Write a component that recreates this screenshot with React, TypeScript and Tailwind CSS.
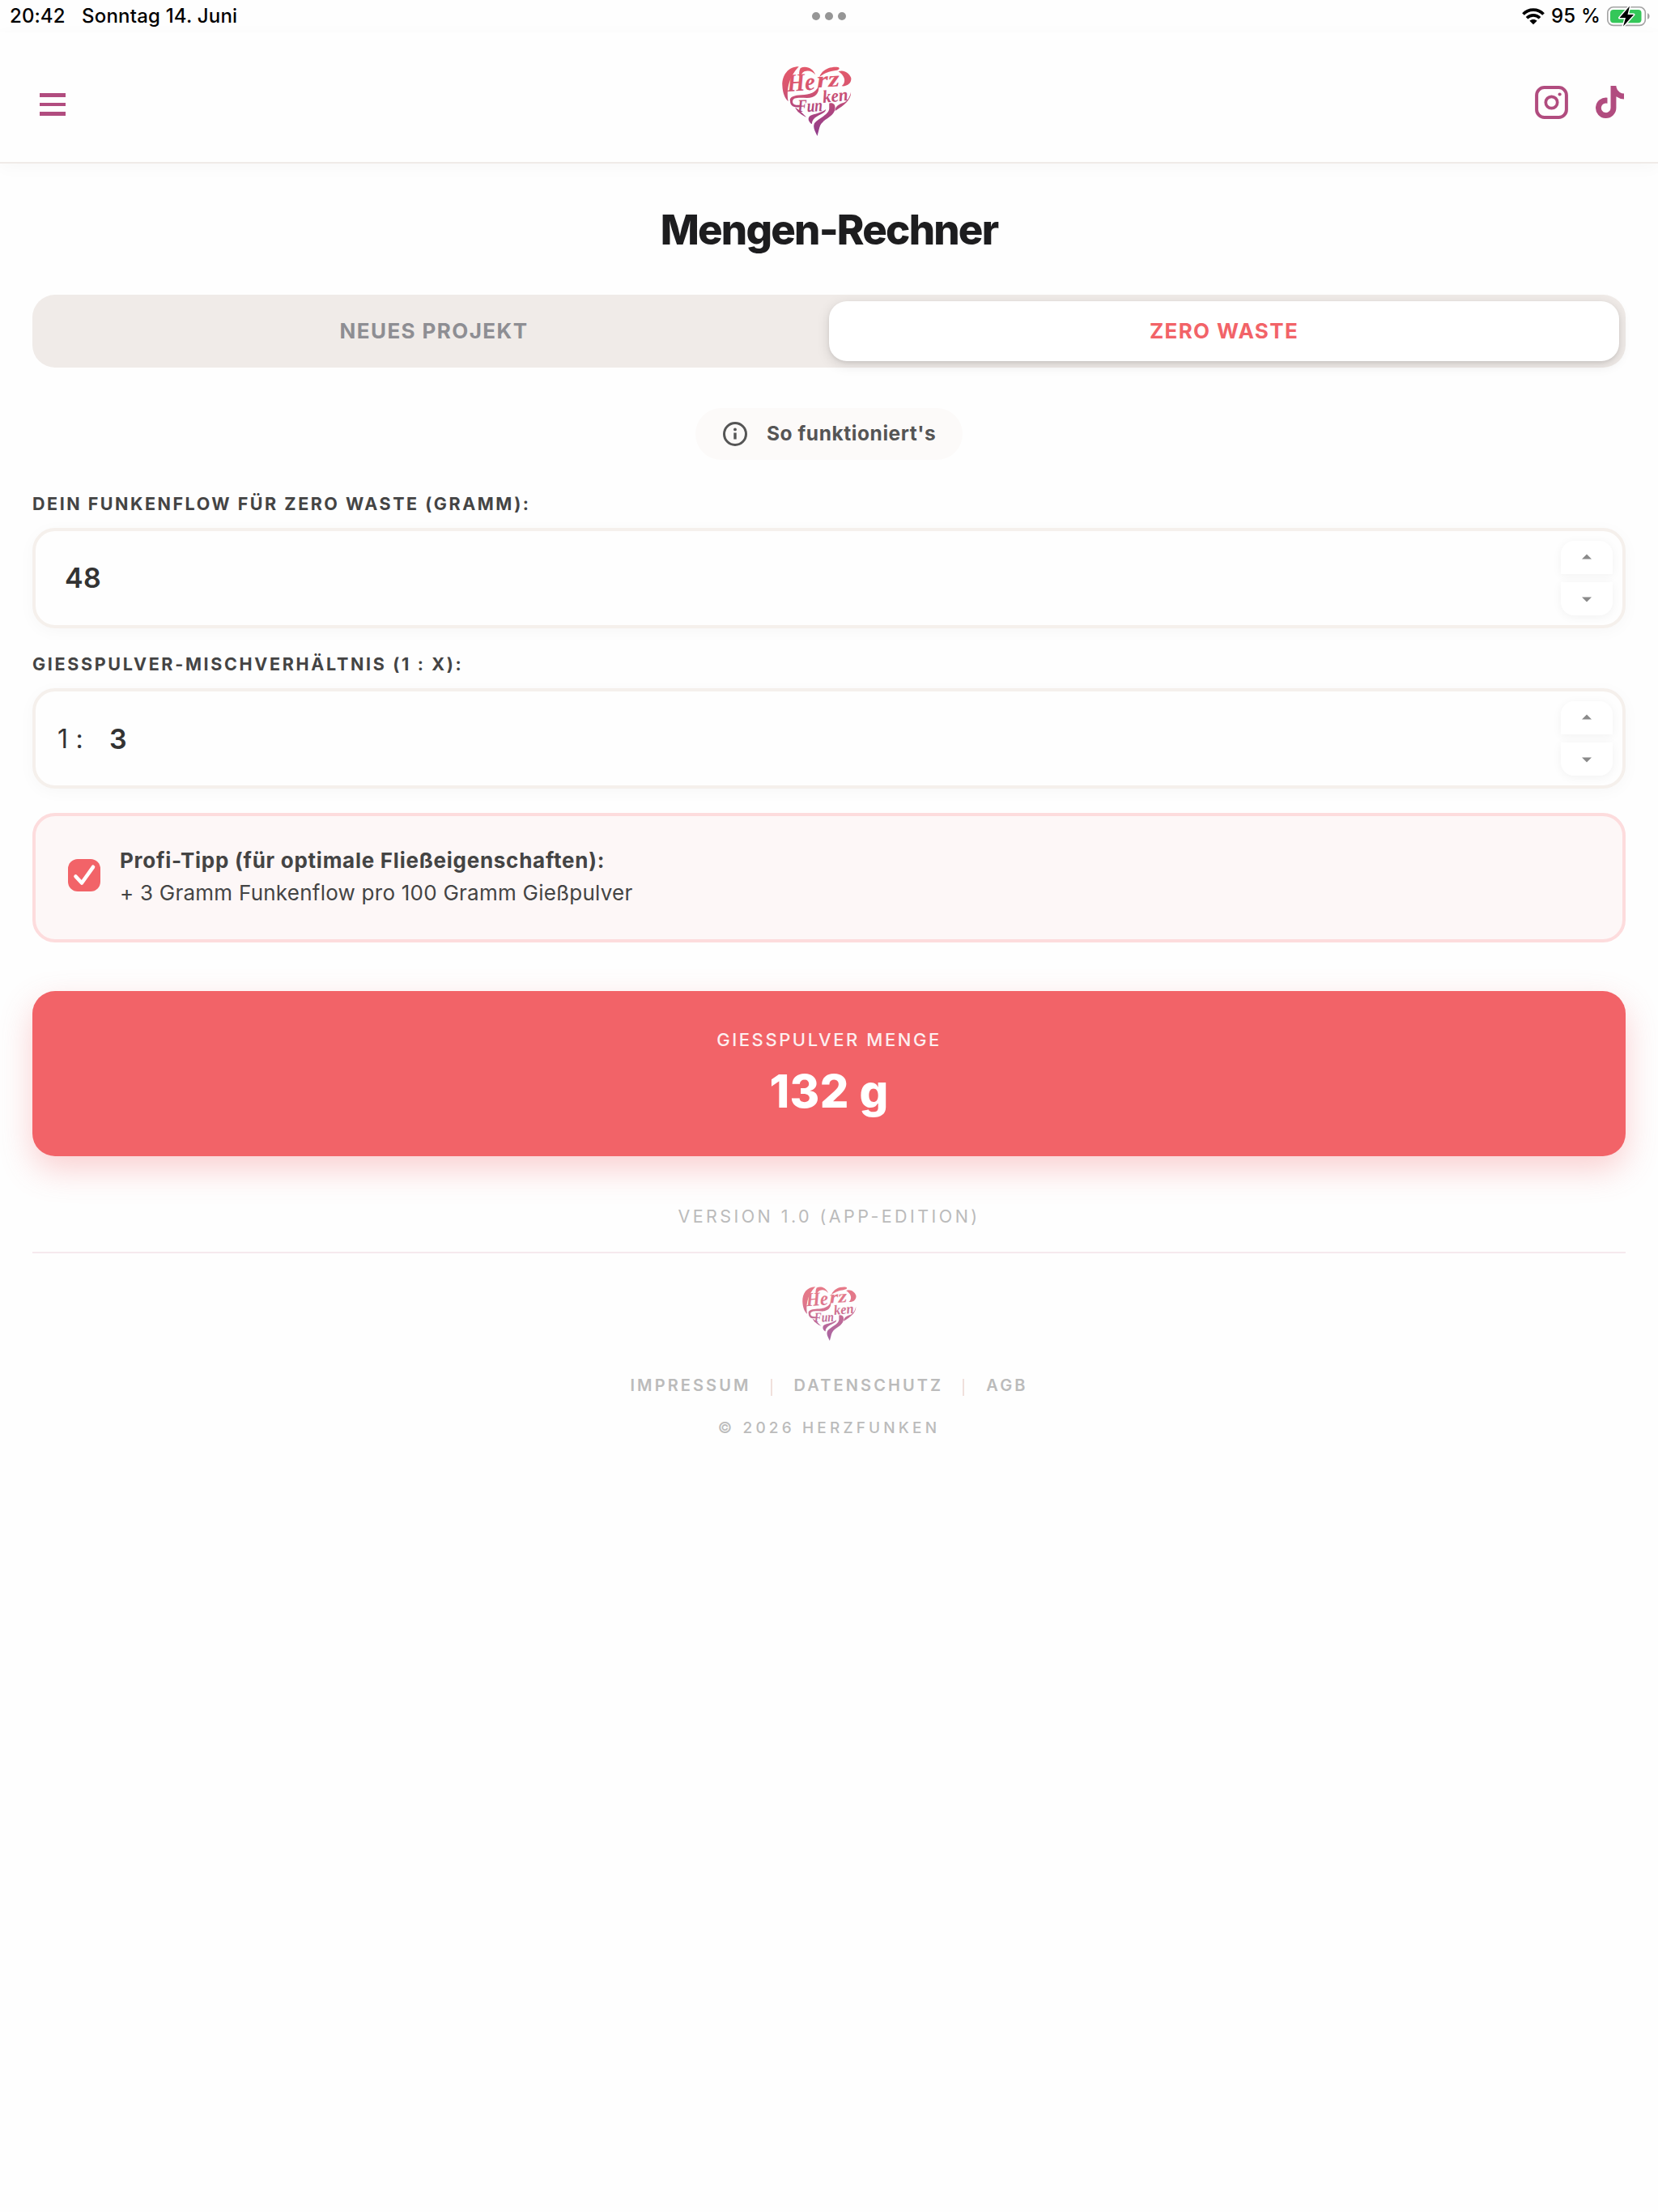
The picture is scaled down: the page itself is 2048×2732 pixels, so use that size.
import React from 'react'
import { FaTiktok } from 'react-icons/fa'

type LogoProps = {
    id: string
    className?: string
}

const HeartLogo = ({ id, className }: LogoProps) => (
    <svg className={className} viewBox="78 65 257 258" preserveAspectRatio="none" overflow="visible">
        <defs>
            <linearGradient id={id} x1="0" y1="65" x2="0" y2="323" gradientUnits="userSpaceOnUse">
                <stop offset="0" stopColor="#e2596b" />
                <stop offset="0.3" stopColor="#d9566f" />
                <stop offset="0.65" stopColor="#ad4580" />
                <stop offset="1" stopColor="#8f3d8c" />
            </linearGradient>
        </defs>
        <g fill={`url(#${id})`}>
            {/* outer flourishes */}
            <path d="M140 66C100 66 78 98 79 135C80 165 89 184 101 195C95 160 98 110 140 66Z" />
            <path d="M146 71C168 60 194 74 201 96C190 82 174 78 160 84C152 88 148 98 144 108C140 94 140 82 146 71Z" />
            <path d="M216 104C226 78 250 66 280 67C294 68 292 78 276 80C254 84 236 88 216 104Z" />
            <path d="M286 84C304 76 326 88 333 108C335 128 318 140 298 138C312 128 316 104 286 84Z" />
            {/* ribbon between the two words */}
            <path d="M108 195C102 178 125 172 150 171C180 170 203 162 213 138C217 165 200 182 170 182C142 182 117 178 117 196C117 206 130 210 144 208L146 214C122 222 108 210 108 195Z" />
            {/* lower tip */}
            <path d="M126 218C138 222 146 232 168 253C150 246 134 232 126 218Z" />
            <path d="M332 160C334 188 308 208 274 230C274 212 290 204 304 200C320 194 328 178 332 160Z" />
            <path d="M252 202C270 196 280 212 270 234C258 258 224 262 216 292L208 323C200 305 190 290 198 275C210 258 250 246 252 222Z" />
            <path d="M186 278C176 270 172 260 179 250C190 240 215 242 240 224C238 246 190 244 188 278Z" />
            {/* wordmark */}
            <g fontFamily="'Liberation Serif', serif" fontStyle="italic" fontWeight="700">
                <text x="98" y="158" fontSize="92" textLength="104" lengthAdjust="spacingAndGlyphs" transform="rotate(-4 98 158)">He</text>
                <text x="208" y="144" fontSize="84" textLength="84" lengthAdjust="spacingAndGlyphs" transform="rotate(-4 208 144)">rz</text>
                <text x="136" y="234" fontSize="66" textLength="92" lengthAdjust="spacingAndGlyphs" transform="rotate(-2 136 234)">Fun</text>
                <text x="230" y="200" fontSize="66" textLength="94" lengthAdjust="spacingAndGlyphs" transform="rotate(-6 230 200)">ken</text>
            </g>
        </g>
    </svg>
)

const Spinner = () => (
    <div className="flex flex-col gap-[10px] w-16 mr-3">
        <button className="h-[41px] pb-[2px] rounded-t-2xl bg-white shadow-[0_2px_12px_rgba(0,0,0,0.05)] flex items-center justify-center">
            <svg className="w-3 h-[7px]" viewBox="0 0 12 7" fill="#8a8a8a"><path d="M6 0.5L12 6.5H0Z" /></svg>
        </button>
        <button className="h-[41px] pt-[2px] rounded-b-2xl bg-white shadow-[0_2px_12px_rgba(0,0,0,0.05)] flex items-center justify-center">
            <svg className="w-3 h-[7px]" viewBox="0 0 12 7" fill="#8a8a8a"><path d="M6 6.5L12 0.5H0Z" /></svg>
        </button>
    </div>
)

const StatusBar = () => (
    <div className="h-10 grid grid-cols-3 items-center text-[24px] leading-10 font-medium text-black">
        <div className="flex pl-3">
            <span className="tracking-[0.1px] w-[89px]">20:42</span>
            <span className="tracking-[0.2px]">Sonntag 14. Juni</span>
        </div>
        <div className="flex justify-center gap-[6px]">
            <span className="w-[10px] h-[10px] rounded-full bg-[#969696]" />
            <span className="w-[10px] h-[10px] rounded-full bg-[#969696]" />
            <span className="w-[10px] h-[10px] rounded-full bg-[#969696]" />
        </div>
        <div className="flex justify-end items-center pr-[9px]">
            <svg className="w-7 h-[21px] mr-2" viewBox="0 0 28 21" fill="none" stroke="#000" strokeWidth="3.7">
                <path d="M1.5 7.6C8.3 0.4 19.7 0.4 26.5 7.6" />
                <path d="M6 12.2C10.5 7.7 17.5 7.7 22 12.2" />
                <path d="M14 20.3L9.4 15.7C12 13.3 16 13.3 18.6 15.7Z" fill="#000" stroke="none" />
            </svg>
            <span className="tracking-[0.2px]">95 %</span>
            <svg className="w-[54px] h-7 ml-2" viewBox="0 0 54 28">
                <rect x="0.8" y="2.8" width="46.5" height="22.6" rx="7" fill="none" stroke="#a3a3a3" strokeWidth="1.6" />
                <path d="M50 10.2C53.4 11.2 53.4 16.8 50 17.8Z" fill="#a3a3a3" />
                <rect x="4" y="6" width="38.5" height="16.2" rx="4" fill="#34c759" />
                <path d="M28 1.5L15.5 16H23L20 26.5L33 12H25.5Z" fill="#000" stroke="#fff" strokeWidth="3" paintOrder="stroke" strokeLinejoin="round" />
            </svg>
        </div>
    </div>
)

const App = () => {
    return (
        <div className="w-full min-h-[2732px] bg-[#fefefe] font-['Inter',sans-serif] whitespace-nowrap">
            <StatusBar />

            {/* ---- Header ----*/}
            <header className="h-[162px] bg-[#fefefe] border-b-2 border-[#f0ebe8] shadow-[0_4px_20px_rgba(0,0,0,0.03)] grid grid-cols-3 items-center">
                <button className="ml-[49px] mt-[18px] w-8 h-7 flex flex-col justify-between">
                    <span className="w-full h-[4.67px] bg-[#b14c7f]" />
                    <span className="w-full h-[4.67px] bg-[#b14c7f]" />
                    <span className="w-full h-[4.67px] bg-[#b14c7f]" />
                </button>
                <HeartLogo id="heart-top" className="w-[86px] h-[86px] justify-self-center mt-[9px] -ml-[30px]" />
                <div className="flex items-center justify-end gap-[34.5px] mt-3 pr-[42px]">
                    <svg className="w-[41px] h-[41px]" viewBox="0 0 41 41" fill="none" stroke="#b14c7f">
                        <rect x="2.1" y="2.1" width="36.8" height="36.8" rx="9.5" strokeWidth="4" />
                        <circle cx="20.5" cy="20.5" r="7.2" strokeWidth="3.7" />
                        <circle cx="30.6" cy="10.5" r="2.1" fill="#b14c7f" stroke="none" />
                    </svg>
                    <FaTiktok className="w-[35px] h-10 text-[#b14c7f]" />
                </div>
            </header>

            <main className="px-10 flex flex-col">
                <h1 className="mt-[52px] text-center text-[51px] leading-[60px] font-extrabold tracking-[-1.8px] text-[#1d1d1f]">Mengen-Rechner</h1>

                {/* ---- Tabs ----*/}
                <div className="mt-[50px] h-[90px] p-2 rounded-[28px] bg-[#f0ebe8] grid grid-cols-2 text-[26px] font-bold">
                    <button className="pb-[2px] tracking-[1.4px] text-[#8e8e93]">NEUES PROJEKT</button>
                    <button className="pb-[2px] tracking-[1.35px] text-[#f26368] bg-white rounded-[22px] shadow-[0_4px_16px_rgba(0,0,0,0.13),0_2px_4px_rgba(0,0,0,0.07)]">ZERO WASTE</button>
                </div>

                <button className="mt-[50px] self-center h-16 w-[330px] rounded-full bg-[#fcfaf9] flex items-center pl-[31px] text-[24.5px] font-bold tracking-[0.56px] text-[#555]">
                    <svg className="w-9 h-9 mr-[21px]" viewBox="0 0 36 36" fill="none" stroke="#555" strokeWidth="3">
                        <circle cx="18" cy="18" r="13.5" />
                        <path d="M18 16.5V24.5" strokeWidth="3.4" />
                        <circle cx="18" cy="12.4" r="1.9" fill="#555" stroke="none" />
                    </svg>
                    <span className="pb-[2px]">So funktioniert's</span>
                </button>

                {/* ---- Inputs ----*/}
                <label className="mt-10 text-[21.5px] leading-7 font-bold tracking-[2.52px] text-[#444]">DEIN FUNKENFLOW FÜR ZERO WASTE (GRAMM):</label>
                <div className="mt-4 h-[124px] rounded-[28px] border-4 border-[#f5f0ec] bg-[#fefefe] shadow-[0_4px_20px_rgba(0,0,0,0.03)] flex items-center justify-between">
                    <span className="pl-9 pb-[1px] text-[34px] font-semibold tracking-[0.4px] text-[#333]">48</span>
                    <Spinner />
                </div>

                <label className="mt-[30px] text-[21.5px] leading-7 font-bold tracking-[2.67px] text-[#444]">GIESSPULVER-MISCHVERHÄLTNIS (1 : X):</label>
                <div className="mt-4 h-[124px] rounded-[28px] border-4 border-[#f5f0ec] bg-[#fefefe] shadow-[0_4px_20px_rgba(0,0,0,0.03)] flex items-center justify-between">
                    <div className="pl-[27px] flex items-center text-[#333]">
                        <span className="w-16 text-[32px] pt-[1px] tracking-[0.2px]">1 :</span>
                        <span className="text-[34px] font-semibold">3</span>
                    </div>
                    <Spinner />
                </div>

                {/* ---- Tip ----*/}
                <div className="mt-[30px] h-40 rounded-[28px] border-4 border-[#fddcdd] bg-[#fdf7f7] flex items-center pl-10">
                    <span className="w-10 h-10 -mt-[6px] rounded-xl bg-[#f26368]">
                        <svg className="w-10 h-10" viewBox="0 0 40 40" fill="none" stroke="#fff" strokeWidth="4.6" strokeLinecap="round" strokeLinejoin="round">
                            <path d="M9.5 21.5L17 29.5L31 9.8" />
                        </svg>
                    </span>
                    <div className="ml-6 -mt-[3px] text-[26px] leading-10 text-[#444]">
                        <p className="font-bold tracking-[0.74px]">Profi-Tipp (für optimale Fließeigenschaften):</p>
                        <p className="tracking-[0.24px]">+ 3 Gramm Funkenflow pro 100 Gramm Gießpulver</p>
                    </div>
                </div>

                {/* ---- Result ----*/}
                <div className="mt-[60px] h-[204px] pt-[46px] rounded-[28px] bg-[#f26368] shadow-[0_16px_40px_rgba(242,99,104,0.3)] text-center text-white">
                    <p className="text-[22px] leading-7 font-medium tracking-[2.55px] opacity-90">GIESSPULVER MENGE</p>
                    <p className="mt-5 text-[56px] leading-[60px] font-extrabold tracking-[0.4px]">132 g</p>
                </div>

                <p className="mt-[60px] text-center text-[21.5px] leading-7 tracking-[3.44px] text-[#bbb]">VERSION 1.0 (APP-EDITION)</p>
            </main>

            {/* ---- Footer ----*/}
            <footer className="mx-10 mt-[30px] border-t-2 border-[#f6e9ee] flex flex-col items-center text-[#bbb]">
                <HeartLogo id="heart-bottom" className="mt-[41px] w-[67px] h-[67px] opacity-80" />
                <div className="mt-[41px] flex items-center gap-6 text-[20px] leading-7 font-semibold">
                    <a className="tracking-[3.1px]">IMPRESSUM</a>
                    <span className="w-[2px] h-[21px] mt-[4px] mr-[3px] bg-[#f0e0dc]" />
                    <a className="tracking-[3.1px]">DATENSCHUTZ</a>
                    <span className="w-[2px] h-[21px] mt-[4px] mr-[3px] bg-[#f0e0dc]" />
                    <a className="tracking-[3.1px]">AGB</a>
                </div>
                <p className="mt-[25px] text-[19px] leading-7 font-medium tracking-[4.15px]">© 2026 HERZFUNKEN</p>
            </footer>
        </div>
    )
}

export default App
